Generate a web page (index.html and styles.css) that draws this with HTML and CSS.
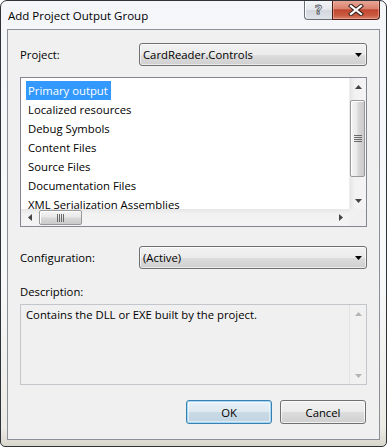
FILE: index.html
```html
<!DOCTYPE html>
<html lang="en">
<head>
    <meta charset="UTF-8" />
    <title>Add Project Output Group</title>
    <link rel="stylesheet" href="styles.css">
</head>
<body>

    <div class="window">
        <div class="titlebar">
            <span class="title">Add Project Output Group</span>
            <div class="caption-buttons">
                <span class="cap-btn help">?</span>
                <span class="cap-btn close">
                    <svg width="16" height="12" viewBox="0 0 16 12">
                        <path d="M3 2 L13 10 M13 2 L3 10" stroke="#3a2520" stroke-width="4.2" stroke-linecap="square" fill="none"/>
                        <path d="M3 2 L13 10 M13 2 L3 10" stroke="#ffffff" stroke-width="2.2" stroke-linecap="square" fill="none"/>
                    </svg>
                </span>
            </div>
        </div>

        <div class="client">
            <div class="field-row">
                <label>Project:</label>
                <div class="combo">
                    <span>CardReader.Controls</span>
                    <svg class="combo-arrow" width="7" height="4" viewBox="0 0 7 4"><path d="M0 0 H7 L3.5 4 Z" fill="#000"/></svg>
                </div>
            </div>

            <div class="listbox">
                <div class="list-main">
                    <ul class="items">
                        <li class="selected">Primary output</li>
                        <li>Localized resources</li>
                        <li>Debug Symbols</li>
                        <li>Content Files</li>
                        <li>Source Files</li>
                        <li>Documentation Files</li>
                        <li>XML Serialization Assemblies</li>
                    </ul>
                    <div class="vscroll">
                        <div class="sb-btn"><svg width="7" height="4" viewBox="0 0 7 4"><path d="M0 4 H7 L3.5 0 Z" fill="#444"/></svg></div>
                        <div class="vthumb">
                            <svg width="8" height="8" viewBox="0 0 8 8"><path d="M0 0.5 H8 M0 2.5 H8 M0 4.5 H8 M0 6.5 H8" stroke="#6a6a6a" stroke-width="1"/></svg>
                        </div>
                        <div class="sb-space"></div>
                        <div class="sb-btn"><svg width="7" height="4" viewBox="0 0 7 4"><path d="M0 0 H7 L3.5 4 Z" fill="#444"/></svg></div>
                    </div>
                </div>
                <div class="hscroll-row">
                    <div class="hscroll">
                        <div class="sb-btn"><svg width="4" height="7" viewBox="0 0 4 7"><path d="M4 0 V7 L0 3.5 Z" fill="#444"/></svg></div>
                        <div class="hthumb">
                            <svg width="8" height="8" viewBox="0 0 8 8"><path d="M0.5 0 V8 M2.5 0 V8 M4.5 0 V8 M6.5 0 V8" stroke="#6a6a6a" stroke-width="1"/></svg>
                        </div>
                        <div class="sb-space"></div>
                        <div class="sb-btn"><svg width="4" height="7" viewBox="0 0 4 7"><path d="M0 0 V7 L4 3.5 Z" fill="#444"/></svg></div>
                    </div>
                    <div class="corner"></div>
                </div>
            </div>

            <div class="field-row config-row">
                <label>Configuration:</label>
                <div class="combo">
                    <span>(Active)</span>
                    <svg class="combo-arrow" width="7" height="4" viewBox="0 0 7 4"><path d="M0 0 H7 L3.5 4 Z" fill="#000"/></svg>
                </div>
            </div>

            <div class="desc-label">Description:</div>
            <div class="desc-box">
                <div class="desc-text">Contains the DLL or EXE built by the project.</div>
                <div class="vscroll disabled">
                    <div class="sb-btn"><svg width="7" height="4" viewBox="0 0 7 4"><path d="M0 4 H7 L3.5 0 Z" fill="#b4b4b4"/></svg></div>
                    <div class="sb-space"></div>
                    <div class="sb-btn"><svg width="7" height="4" viewBox="0 0 7 4"><path d="M0 0 H7 L3.5 4 Z" fill="#b4b4b4"/></svg></div>
                </div>
            </div>

            <div class="button-row">
                <button class="btn btn-default">OK</button>
                <button class="btn">Cancel</button>
            </div>
        </div>
    </div>

</body>
</html>
```

FILE: styles.css
```css
* {
    box-sizing: border-box;
}

body {
    margin: 0;
    background: #ffffff;
    font-family: 'Segoe UI', 'Open Sans', sans-serif;
    font-size: 11.3px;
    color: #000;
}

.window {
    width: 387px;
    height: 447px;
    border: 1px solid #2f3338;
    border-radius: 7px 7px 5px 5px;
    background: linear-gradient(180deg, #f4f6f9 0%, #f8f9fb 60%, #ecebe6 96%, #d9d6cc 100%);
    padding: 0 6px 6px 6px;
    display: flex;
    flex-direction: column;
    overflow: hidden;
}

/* barra de titulo */
.titlebar {
    height: 28px;
    display: flex;
    justify-content: space-between;
    align-items: flex-start;
}

.title {
    padding: 7px 0 0 1px;
    line-height: 16px;
    font-size: 11.5px;
}

.caption-buttons {
    display: flex;
    margin-top: -1px;
}

.cap-btn {
    height: 20px;
    display: flex;
    align-items: center;
    justify-content: center;
    border: 1px solid #6b7078;
    border-top: none;
}

.help {
    width: 28px;
    border-right: none;
    border-radius: 0 0 0 4px;
    background: linear-gradient(180deg, #f5f6f8 0%, #e4e7eb 50%, #d3d7dd 51%, #dfe3e8 100%);
    box-shadow: inset 1px 0 0 #ffffff;
    font-family: 'DejaVu Sans', sans-serif;
    font-weight: bold;
    font-size: 13px;
    color: #eef0f3;
    -webkit-text-stroke: 0.8px #555a60;
}

.close {
    width: 48px;
    border-color: #4d1f16;
    border-radius: 0 0 4px 0;
    background: linear-gradient(180deg, #e9aa9c 0%, #d9826f 45%, #c2472f 52%, #c95940 80%, #d8826c 100%);
    box-shadow: inset 0 0 0 1px rgba(255, 200, 190, 0.45);
}

/* area cliente */
.client {
    height: 411px;
    border: 1px solid #8b9098;
    background: #f0f0f0;
    padding: 13px 12px 15px 12px;
    display: flex;
    flex-direction: column;
}

.field-row {
    height: 23px;
    display: flex;
    align-items: center;
}

.field-row label {
    line-height: 16px;
}

.combo {
    margin-left: auto;
    width: 228px;
    height: 23px;
    border: 1px solid #707070;
    border-radius: 3px;
    background: linear-gradient(180deg, #f2f2f2 0%, #ebebeb 50%, #dddddd 51%, #cfcfcf 100%);
    box-shadow: inset 0 0 0 1px rgba(255, 255, 255, 0.6);
    display: flex;
    align-items: center;
    padding: 0 4px 0 3px;
}

.combo span {
    flex: 1;
    line-height: 16px;
}

/* lista */
.listbox {
    margin-top: 11px;
    height: 150px;
    border: 1px solid #828790;
    background: #fff;
    display: flex;
    flex-direction: column;
}

.list-main {
    height: 131px;
    display: flex;
}

.items {
    flex: 1;
    list-style: none;
    margin: 0;
    padding: 3px 0 0 5px;
    overflow: hidden;
}

.items li {
    width: max-content;
    height: 19px;
    line-height: 19px;
    padding: 0 3px 0 2px;
    white-space: nowrap;
}

.items li.selected {
    background: #3399ff;
    color: #fff;
}

.vscroll {
    width: 17px;
    display: flex;
    flex-direction: column;
    background: linear-gradient(90deg, #e6e6e6 0%, #f2f2f2 30%, #f4f4f4 100%);
    border-left: 1px solid #ececec;
}

.sb-btn {
    width: 17px;
    height: 17px;
    flex-shrink: 0;
    display: flex;
    align-items: center;
    justify-content: center;
}

.vscroll .sb-btn {
    width: 16px;
}

.sb-space {
    flex: 1;
}

.vthumb {
    margin: 5px 1px 0 0;
    height: 77px;
    border: 1px solid #989898;
    border-radius: 2px;
    background: linear-gradient(90deg, #f4f4f4 0%, #e9e9e9 45%, #d8d8d8 55%, #cbcbcb 100%);
    box-shadow: inset 1px 1px 0 #fff;
    display: flex;
    align-items: center;
    justify-content: center;
}

.hscroll-row {
    height: 17px;
    display: flex;
}

.hscroll {
    flex: 1;
    display: flex;
    background: linear-gradient(180deg, #e6e6e6 0%, #f2f2f2 30%, #f4f4f4 100%);
}

.hthumb {
    margin: 1px 0 1px 1px;
    width: 43px;
    border: 1px solid #989898;
    border-radius: 2px;
    background: linear-gradient(180deg, #f4f4f4 0%, #e9e9e9 45%, #d8d8d8 55%, #cbcbcb 100%);
    box-shadow: inset 1px 1px 0 #fff;
    display: flex;
    align-items: center;
    justify-content: center;
}

.corner {
    width: 17px;
    background: #f0f0f0;
}

.config-row {
    margin-top: 19px;
}

.desc-label {
    margin-top: 15px;
    line-height: 16px;
    height: 16px;
}

.desc-box {
    margin-top: 4px;
    height: 81px;
    border: 1px solid #c2c5ca;
    background: #f0f0f0;
    display: flex;
}

.desc-text {
    flex: 1;
    padding: 2px 0 0 5px;
    line-height: 16px;
}

.vscroll.disabled {
    background: #f1f1f1;
    border-left: 1px solid #e2e2e2;
}

/* botones */
.button-row {
    margin-top: 15px;
    display: flex;
    justify-content: flex-end;
    gap: 8px;
    padding-right: 1px;
}

.btn {
    width: 86px;
    height: 24px;
    border: 1px solid #707070;
    border-radius: 3px;
    background: linear-gradient(180deg, #f2f2f2 0%, #ebebeb 50%, #dddddd 51%, #cfcfcf 100%);
    box-shadow: inset 0 0 0 1px rgba(255, 255, 255, 0.7);
    font-family: 'Segoe UI', 'Open Sans', sans-serif;
    font-size: 11.3px;
    color: #000;
    padding: 0;
}

.btn-default {
    border-color: #3c7fb1;
    background: linear-gradient(180deg, #e8f1f6 0%, #dde9f1 50%, #c9dae6 51%, #c2d4e2 100%);
    box-shadow: inset 0 0 0 1px #9fd8f6, inset 0 0 0 2px rgba(255, 255, 255, 0.5);
}
```
